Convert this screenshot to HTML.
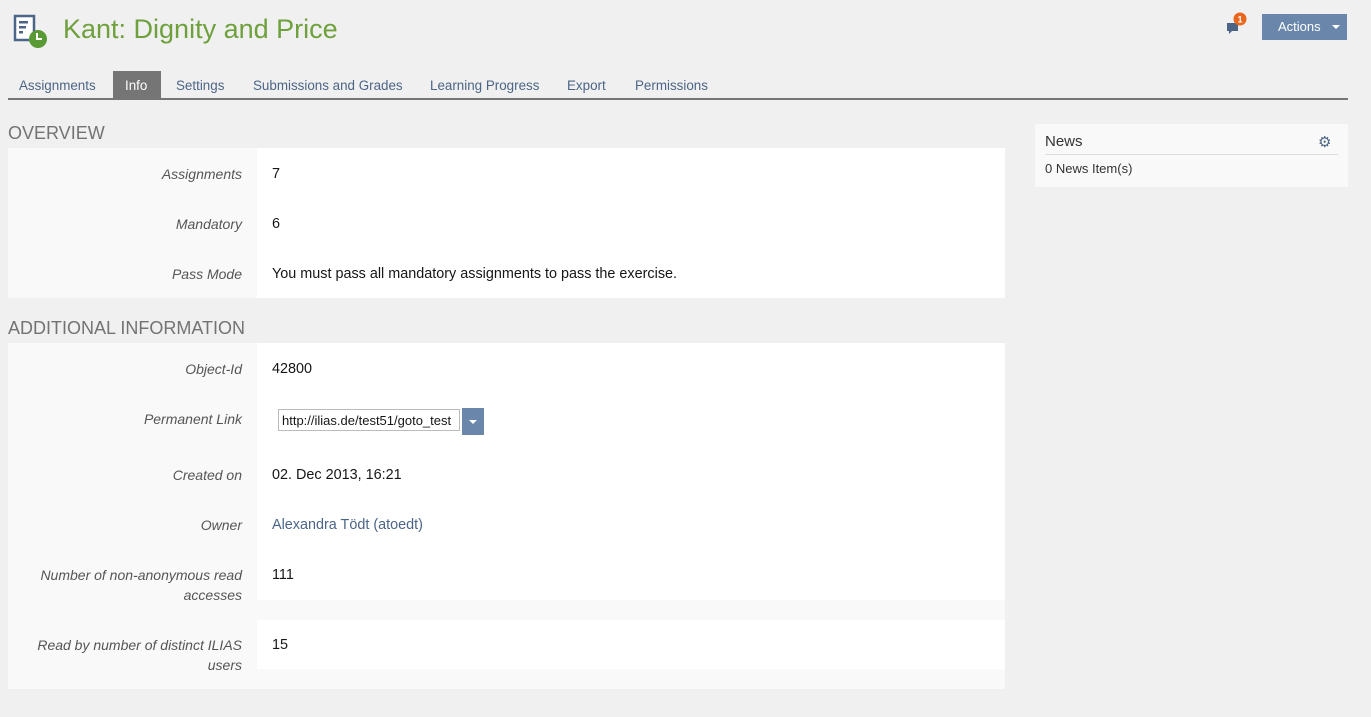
<!DOCTYPE html>
<html><head><meta charset="utf-8"><style>
body{margin:0;width:1371px;height:717px;background:#f0f0f0;font-family:"Liberation Sans",sans-serif;position:relative;overflow:hidden;color:#161616}
.a{position:absolute}
.tabs span{position:absolute;top:78px;font-size:13.4px;color:#4c6586}
.lbl{position:absolute;left:8px;width:234px;text-align:right;font-style:italic;font-size:14px;color:#555;line-height:20px}
.val{position:absolute;left:272px;font-size:14.4px;line-height:20px;color:#161616}
.h{position:absolute;left:8px;font-size:18px;color:#737373}
</style></head><body>
<svg class="a" style="left:13px;top:14px" width="36" height="36" viewBox="0 0 36 36">
<rect x="2" y="2" width="19" height="24" fill="#fff" stroke="#4c6586" stroke-width="2.5"/>
<rect x="6" y="7" width="9" height="2.5" fill="#4c6586"/><rect x="6" y="12" width="7" height="2.5" fill="#4c6586"/><rect x="6" y="17" width="4" height="2.5" fill="#4c6586"/>
<circle cx="25" cy="25" r="9" fill="#5a9a34"/><path d="M24 19v6h5" stroke="#fff" stroke-width="2" fill="none"/>
</svg>
<div class="a" style="left:63px;top:14px;font-size:27px;color:#6ea03c">Kant: Dignity and Price</div>
<svg class="a" style="left:1225px;top:10px" width="26" height="26" viewBox="0 0 26 26">
<path d="M2 13h11v8H7l-3 3v-3H2z" fill="#4c6586"/><circle cx="15" cy="9" r="6.5" fill="#e8671a"/>
<text x="15" y="12.5" font-size="9" font-weight="bold" fill="#fff" text-anchor="middle" font-family="Liberation Sans">1</text></svg>
<div class="a" style="left:1262px;top:14px;width:85px;height:26px;background:#6a87ab;color:#fff;font-size:13px;line-height:26px"><span style="position:absolute;left:16px">Actions</span><span style="position:absolute;left:70px;top:11px;border:4px solid transparent;border-top-color:#fff;border-bottom:0"></span></div>
<div class="tabs">
<span style="left:19px">Assignments</span>
<div class="a" style="left:113px;top:71px;width:48px;height:28px;background:#757575"></div>
<span style="left:125px;color:#fff">Info</span>
<span style="left:176px">Settings</span>
<span style="left:253px">Submissions and Grades</span>
<span style="left:430px">Learning Progress</span>
<span style="left:567px">Export</span>
<span style="left:635px">Permissions</span>
</div>
<div class="a" style="left:8px;top:98px;width:1340px;height:2px;background:#757575"></div>
<div class="h" style="top:123px">OVERVIEW</div>
<div class="a" style="left:8px;top:148px;width:997px;height:150px;background:#f9f9f9"></div>
<div class="a" style="left:257px;top:148px;width:748px;height:150px;background:#fff"></div>
<div class="lbl" style="top:164px">Assignments</div><div class="val" style="top:164px">7</div>
<div class="lbl" style="top:214px">Mandatory</div><div class="val" style="top:214px">6</div>
<div class="lbl" style="top:264px">Pass Mode</div><div class="val" style="top:264px">You must pass all mandatory assignments to pass the exercise.</div>
<div class="h" style="top:318px">ADDITIONAL INFORMATION</div>
<div class="a" style="left:8px;top:343px;width:997px;height:346px;background:#f9f9f9"></div>
<div class="a" style="left:257px;top:343px;width:748px;height:257px;background:#fff"></div>
<div class="a" style="left:257px;top:620px;width:748px;height:49px;background:#fff"></div>
<div class="lbl" style="top:359px">Object-Id</div><div class="val" style="top:359px">42800</div>
<div class="lbl" style="top:409px">Permanent Link</div>
<div class="a" style="left:278px;top:409px;height:22px;border:1px solid #bbb;background:#fff;font-size:13px;line-height:22px;overflow:hidden;white-space:nowrap;padding-left:3px;box-sizing:border-box;width:182px">http://ilias.de/test51/goto_test</div>
<div class="a" style="left:462px;top:408px;width:22px;height:27px;background:#6a87ab"><span style="position:absolute;left:7px;top:12px;border:4px solid transparent;border-top-color:#fff;border-bottom:0"></span></div>
<div class="lbl" style="top:465px">Created on</div><div class="val" style="top:465px">02. Dec 2013, 16:21</div>
<div class="lbl" style="top:515px">Owner</div><div class="val" style="top:515px;color:#4c6586">Alexandra Tödt (atoedt)</div>
<div class="lbl" style="top:565px">Number of non-anonymous read accesses</div><div class="val" style="top:565px">111</div>
<div class="lbl" style="top:635px">Read by number of distinct ILIAS users</div><div class="val" style="top:635px">15</div>
<div class="a" style="left:1035px;top:124px;width:313px;height:63px;background:#f9f9f9"></div>
<div class="a" style="left:1045px;top:133px;font-size:15px;color:#333">News</div>
<div class="a" style="left:1045px;top:154px;width:293px;height:1px;background:#ddd"></div>
<div class="a" style="left:1318px;top:133px;font-size:15px;color:#4c6586">⚙</div>
<div class="a" style="left:1045px;top:161px;font-size:13px;color:#333">0 News Item(s)</div>
</body></html>
